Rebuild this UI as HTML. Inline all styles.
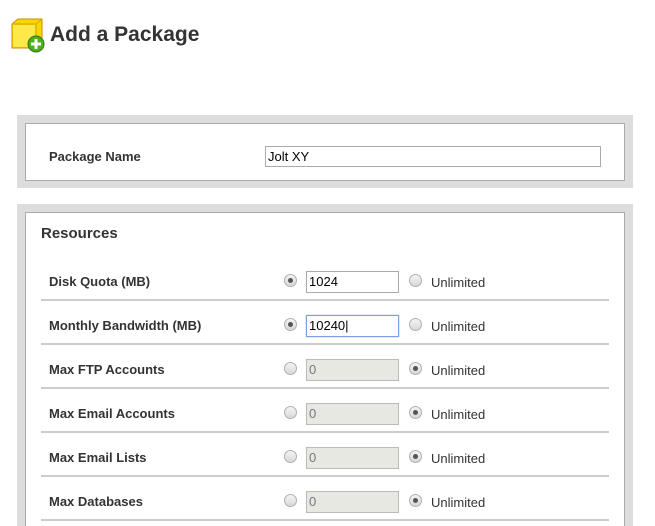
<!DOCTYPE html>
<html><head><style>
html,body{margin:0;width:655px;height:526px;overflow:hidden}
body{background:#fff;font-family:"Liberation Sans",sans-serif;color:#333;position:relative}
.a{position:absolute}
h1{position:absolute;left:50px;top:23px;margin:0;font-size:21px;font-weight:bold;color:#333}
.frame{position:absolute;background:#ddd}
.inner{position:absolute;background:#fff;border:1px solid #aaa;box-sizing:border-box}
.lbl{position:absolute;font-size:13px;font-weight:bold;color:#333}
.inp{position:absolute;box-sizing:border-box;border:1px solid #aaa;background:#fff;font-size:13px;padding:2px 2px;height:22px;color:#000;line-height:16px}
.dis{background:#e8e8e2;color:#777;border-color:#bbb}
.rad{position:absolute;width:11px;height:11px;border-radius:50%;border:1px solid #b0b0b0;background:linear-gradient(#f4f4f4,#d8d8d8)}
.rad.on::after{content:"";position:absolute;left:3px;top:3px;width:5px;height:5px;border-radius:50%;background:#555}
.un{position:absolute;font-size:13px;color:#333}
.sep{position:absolute;left:41px;width:568px;height:2px;background:#ccc}
</style></head><body>
<svg class="a" style="left:11px;top:18px" width="34" height="36" viewBox="0 0 34 36">
<path d="M1 6 L7 1 L31 1 L31 25 L25 30 L1 30 Z" fill="#f5d800" stroke="#d08a00" stroke-width="1"/>
<path d="M1 6 L25 6 L25 30 M25 6 L31 1" fill="none" stroke="#e0a000" stroke-width="1"/>
<rect x="2" y="7" width="22" height="22" fill="#ffe94a"/>
<circle cx="25" cy="26" r="8" fill="#4caf1c" stroke="#2a7a10"/>
<rect x="20" y="24.5" width="10" height="3" fill="#fff"/><rect x="23.5" y="21" width="3" height="10" fill="#fff"/>
</svg>
<h1>Add a Package</h1>
<div class="frame" style="left:17px;top:115px;width:616px;height:73px"></div>
<div class="inner" style="left:25px;top:123px;width:600px;height:58px"></div>
<div class="lbl" style="left:49px;top:149px">Package Name</div>
<div class="inp" style="left:265px;top:146px;width:336px;height:21px">Jolt XY</div>
<div class="frame" style="left:17px;top:204px;width:616px;height:330px"></div>
<div class="inner" style="left:25px;top:212px;width:600px;height:330px"></div>
<div class="lbl" style="left:41px;top:225px;font-size:15px">Resources</div>

<div class="lbl" style="left:49px;top:274px">Disk Quota (MB)</div>
<div class="rad on" style="left:284px;top:274px"></div>
<div class="inp" style="left:306px;top:271px;width:93px">1024</div>
<div class="rad" style="left:409px;top:274px"></div>
<div class="un" style="left:431px;top:275px">Unlimited</div>
<div class="sep" style="top:299px"></div>

<div class="lbl" style="left:49px;top:318px">Monthly Bandwidth (MB)</div>
<div class="rad on" style="left:284px;top:318px"></div>
<div class="inp" style="left:306px;top:315px;width:93px;border-color:#7aa0e0;box-shadow:0 0 1px #7aa0e0">10240|</div>
<div class="rad" style="left:409px;top:318px"></div>
<div class="un" style="left:431px;top:319px">Unlimited</div>
<div class="sep" style="top:343px"></div>

<div class="lbl" style="left:49px;top:362px">Max FTP Accounts</div>
<div class="rad" style="left:284px;top:362px"></div>
<div class="inp dis" style="left:306px;top:359px;width:93px">0</div>
<div class="rad on" style="left:409px;top:362px"></div>
<div class="un" style="left:431px;top:363px">Unlimited</div>
<div class="sep" style="top:387px"></div>

<div class="lbl" style="left:49px;top:406px">Max Email Accounts</div>
<div class="rad" style="left:284px;top:406px"></div>
<div class="inp dis" style="left:306px;top:403px;width:93px">0</div>
<div class="rad on" style="left:409px;top:406px"></div>
<div class="un" style="left:431px;top:407px">Unlimited</div>
<div class="sep" style="top:431px"></div>

<div class="lbl" style="left:49px;top:450px">Max Email Lists</div>
<div class="rad" style="left:284px;top:450px"></div>
<div class="inp dis" style="left:306px;top:447px;width:93px">0</div>
<div class="rad on" style="left:409px;top:450px"></div>
<div class="un" style="left:431px;top:451px">Unlimited</div>
<div class="sep" style="top:475px"></div>

<div class="lbl" style="left:49px;top:494px">Max Databases</div>
<div class="rad" style="left:284px;top:494px"></div>
<div class="inp dis" style="left:306px;top:491px;width:93px">0</div>
<div class="rad on" style="left:409px;top:494px"></div>
<div class="un" style="left:431px;top:495px">Unlimited</div>
<div class="sep" style="top:519px"></div>
</body></html>
